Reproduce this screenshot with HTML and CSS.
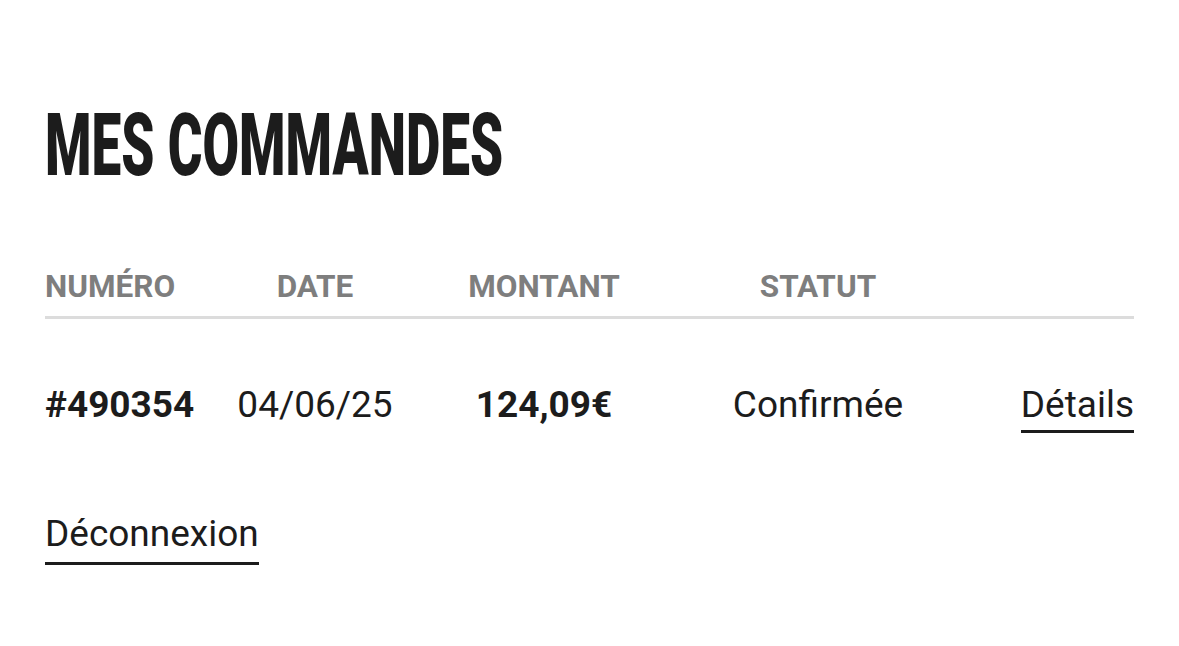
FILE: index.html
```html
<!DOCTYPE html>
<html lang="fr">
<head>
<meta charset="utf-8">
<title>Mes commandes</title>
<link rel="stylesheet" href="styles.css">
</head>
<body>
<main class="account">
  <h1 class="title">MES COMMANDES</h1>
  <div class="orders">
    <div class="row head">
      <div class="c1">NUMÉRO</div>
      <div class="c2">DATE</div>
      <div class="c3">MONTANT</div>
      <div class="c4">STATUT</div>
      <div class="c5"></div>
    </div>
    <div class="row item">
      <div class="c1 strong">#490354</div>
      <div class="c2">04/06/25</div>
      <div class="c3 strong">124,09€</div>
      <div class="c4">Confirmée</div>
      <div class="c5"><a class="link" href="#">Détails</a></div>
    </div>
  </div>
  <a class="link logout" href="#">Déconnexion</a>
</main>
</body>
</html>
```
FILE: styles.css
```css
html, body {
  margin: 0;
  padding: 0;
  background: #ffffff;
}
body {
  font-family: Roboto, "Liberation Sans", sans-serif;
  color: #1c1c1c;
}
.account {
  padding: 101px 45px 0 45px;
  width: 1089px;
}
.title {
  margin: 0;
  font-family: Roboto, "Liberation Sans", sans-serif;
  font-weight: 900;
  font-size: 88px;
  line-height: 88px;
  height: 88px;
  color: #1c1c1c;
  transform: scaleX(0.603);
  transform-origin: 0 0;
  white-space: nowrap;
}
.orders {
  margin-top: 82px;
}
.row {
  display: grid;
  grid-template-columns: 155px 230px 228px 320px 156px;
}
.c1 { text-align: left; }
.c2, .c3, .c4 { text-align: center; }
.c5 { text-align: right; }
.head {
  font-size: 31.5px;
  line-height: 31px;
  font-weight: 700;
  color: #7e7e7e;
  padding-bottom: 14px;
  border-bottom: 3px solid #dcdcdc;
}
.item {
  font-size: 37px;
  line-height: 37px;
  padding-top: 67px;
}
.strong {
  font-weight: 700;
}
.link {
  color: #1c1c1c;
  text-decoration: none;
  display: inline-block;
  padding-bottom: 7px;
  border-bottom: 3px solid #1c1c1c;
}
.logout {
  font-size: 37px;
  line-height: 37px;
  margin-top: 82px;
  padding-bottom: 10px;
}
```
